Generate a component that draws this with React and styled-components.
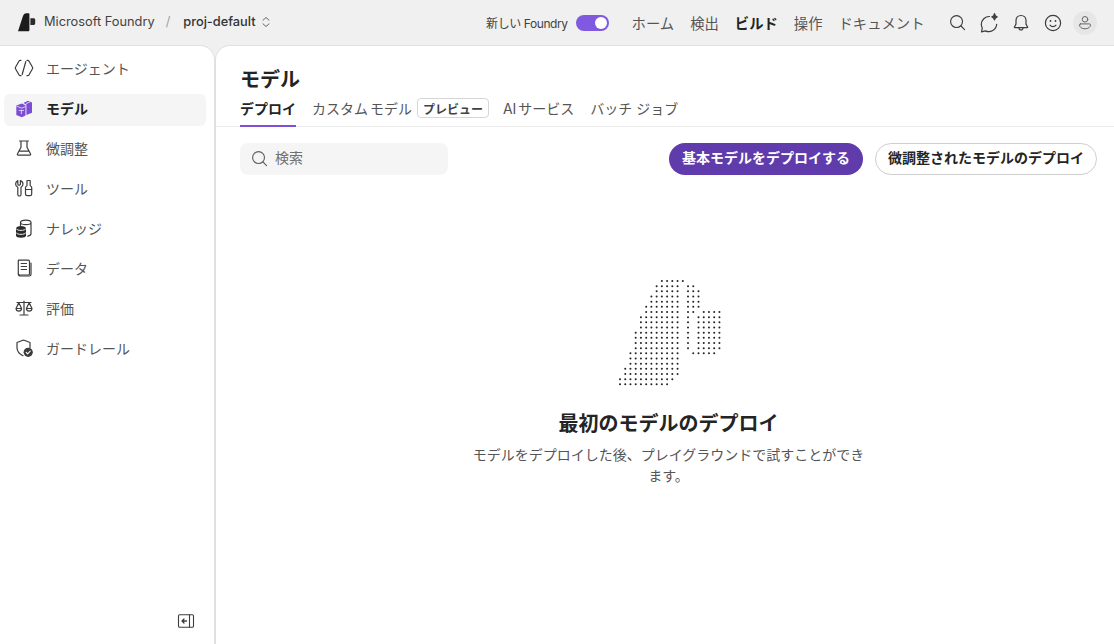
import React from "react";
import styled, { createGlobalStyle } from "styled-components";

const Global = createGlobalStyle`
  html, body { margin: 0; height: 100%; background: #f0f0f0; }
  #root { height: 100%; }
  * { box-sizing: border-box; }
  body { font-family: Inter, "Noto Sans CJK JP", sans-serif; color: #242424; overflow: hidden; }
`;

const Page = styled.div`height: 644px; display: flex; flex-direction: column;`;
const Header = styled.header`height: 45px; flex: none; display: flex; align-items: center; padding: 0 13px 0 18px; background: #f0f0f0;`;
const Brand = styled.div`display: flex; align-items: center;`;
const BrandText = styled.span`font-size: 12.8px; margin-bottom: 2px; white-space: nowrap;`;
const BrandName = styled(BrandText)`margin-left: 8px; color: #424242;`;
const Slash = styled(BrandText)`margin: 0 13px 2px 11px; color: #a0a0a0;`;
const Project = styled(BrandText)`font-weight: 500; color: #333; margin-right: 5px;`;
const HeaderRight = styled.div`margin-left: auto; display: flex; align-items: center;`;
const ToggleLabel = styled.span`font-size: 12px; letter-spacing: -.42px; color: #424242; margin-right: 8px; white-space: nowrap;`;
const Toggle = styled.span`
  width: 33px; height: 16px; border-radius: 8px; background: #7f5ae0; display: flex; align-items: center;
  justify-content: flex-end; padding-right: 2px; margin-right: 23px;
  &::after { content: ""; width: 12px; height: 12px; border-radius: 50%; background: #fff; }
`;
const TopNav = styled.nav`display: flex; gap: 16px; margin-right: 16.5px; padding-bottom: 1px;`;
const TopLink = styled.span`font-size: 14.33px; font-weight: ${p => (p.$active ? 700 : 400)}; color: ${p => (p.$active ? "#242424" : "#555")}; white-space: nowrap;`;
const TopIcons = styled.div`display: grid; grid-auto-flow: column; grid-auto-columns: 32px; justify-items: center; align-items: center;`;
const Avatar = styled.span`width: 24px; height: 24px; border-radius: 50%; background: #e6e6e6; display: flex; align-items: center; justify-content: center;`;

const Body = styled.div`flex: 1; min-height: 0; display: flex; gap: 2px; padding-top: 1px; background: #f0f0f0; overflow: hidden;`;
const Sidebar = styled.aside`width: 214px; flex: none; background: #fff; border-top-right-radius: 14px; box-shadow: 0 0 0 1px #e0e0e0; padding: 8px 8px 16px 4px; display: flex; flex-direction: column; gap: 8px;`;
const NavItem = styled.div`
  height: 32px; flex: none; display: flex; align-items: center; gap: 12px; padding: 0 10px 4px; border-radius: 6px; font-size: 14px;
  background: ${p => (p.$active ? "#f5f5f5" : "transparent")};
  color: ${p => (p.$active ? "#242424" : "#555")};
  font-weight: ${p => (p.$active ? 700 : 400)};
`;
const Collapse = styled.div`margin-top: auto; display: flex; justify-content: flex-end; padding-right: 11px;`;

const Main = styled.main`flex: 1; min-width: 0; background: #fff; border-top-left-radius: 14px; box-shadow: 0 0 0 1px #e0e0e0; display: flex; flex-direction: column;`;
const TitleBlock = styled.div`padding: 21px 17px 0 24px; border-bottom: 1px solid #ebebeb;`;
const Title = styled.h1`margin: 0 0 4px; font-size: 20px; line-height: 26px; font-weight: 700; color: #242424;`;
const Tabs = styled.div`display: flex; align-items: flex-start; gap: 16px;`;
const Tab = styled.div`
  height: 30px; display: flex; align-items: center; gap: 5px; padding-bottom: 6px; font-size: 14px; white-space: nowrap;
  word-spacing: ${p => (p.$tight ? "-2px" : "0")};
  color: ${p => (p.$active ? "#242424" : "#555")};
  font-weight: ${p => (p.$active ? 700 : 400)};
  border-bottom: 2px solid ${p => (p.$active ? "#7f4fd6" : "transparent")};
  margin-bottom: -1px;
`;
const Badge = styled.span`
  height: 20px; display: inline-flex; align-items: center; padding: 0 5px; margin-right: -2px; border: 1px solid #d6d6d6; border-radius: 4px;
  font-size: 12px; font-weight: 600; color: #424242;
`;
const Toolbar = styled.div`padding: 16px 17px 0 24px; display: flex; align-items: center; gap: 12px;`;
const Search = styled.div`
  width: 208px; height: 32px; border-radius: 8px; background: #f5f5f5; display: flex; align-items: center; gap: 7px;
  padding: 0 0 4px 11px; margin-right: auto; font-size: 14px; color: #707070;
  svg { margin-top: 3px; }
`;
const Primary = styled.button`
  height: 32px; padding: 0 13px 4px; border: 0; border-radius: 16px; background: #5f3bab; color: #fff; font: 600 14px Inter, "Noto Sans CJK JP", sans-serif; white-space: nowrap;
`;
const Secondary = styled.button`
  height: 32px; padding: 0 12px 4px; border: 1px solid #cfcfcf; border-radius: 16px; background: #fff; color: #242424; font: 600 14px Inter, "Noto Sans CJK JP", sans-serif; white-space: nowrap;
`;
const Empty = styled.section`padding: 105px 17px 0 24px; display: flex; flex-direction: column; align-items: center; text-align: center;`;
const Art = styled.svg`flex: none; margin-left: 2px; fill: #222;`;
const EmptyTitle = styled.h2`margin: 24px 0 0; font-size: 20px; line-height: 28px; font-weight: 700; color: #242424;`;
const EmptyText = styled.p`margin: 6px 0 0; width: 400px; font-size: 14px; line-height: 21px; color: #555;`;

const Ico = ({ size = 20, children, stroke = "#3c3c3c", w = 1.2 }) => (
  <svg width={size} height={size} viewBox="0 0 20 20" fill="none" stroke={stroke} strokeWidth={w} strokeLinecap="round" strokeLinejoin="round" style={{ flex: "none" }}>
    {children}
  </svg>
);

const Logo = () => (
  <svg width="18" height="19" viewBox="0 0 18 19" style={{ flex: "none" }}>
    <path d="M0 18.200 4.900 3.200C5.500 1.300 6.700.3 8.400.3h2c.7 0 1 .4 1 1v15.600c0 .8-.5 1.300-1.200 1.300H0Z" fill="#1c1c1c" />
    <path d="M12.400 5.200h3.200c1 0 1.600.6 1.600 1.500v3.600c0 1-.6 1.600-1.600 1.600h-3.200Z" fill="#2a2a2a" />
  </svg>
);

const Updown = () => (
  <svg width="10" height="12" viewBox="0 0 10 12" fill="none" stroke="#666" strokeWidth="1" strokeLinecap="round" strokeLinejoin="round" style={{ marginBottom: 2 }}>
    <path d="M2 4.200 5 1.500l3 2.700M2 7.800l3 2.700 3-2.700" />
  </svg>
);

const AgentIcon = () => (
  <Ico>
    <path d="M7 2.300H6.300a1.500 1.500 0 0 0-1.200.7L1.500 9.200a1.500 1.500 0 0 0 0 1.600l3.600 6.200c.3.500.7.700 1.200.7H7M13 2.300h.7c.5 0 .9.200 1.200.7l3.600 6.200a1.500 1.500 0 0 1 0 1.600l-3.600 6.200c-.3.500-.7.700-1.200.7H13M11.800 3.500 8.200 16.500" />
  </Ico>
);
const ModelIcon = () => (
  <svg width="20" height="20" viewBox="0 0 20 20" style={{ flex: "none" }}>
    <path d="M2.300 7.600 7.800 5.500l3.700 1.700v10.400l-3.700 1.700-5.500-2.300Z" fill="#7c4dd3" />
    <path d="M12.400 6.600 9.300 5.100 14 2.800l4 1.700v10.200l-5.600 2.200Z" fill="#7c4dd3" />
    <path d="M3 8.200l4.800 2 3.300-1.500M5.200 12.400h4.400M7.400 12.400v3.400M12.500 5.400l3.400-1.400" fill="none" stroke="#e6dcf8" strokeWidth=".9" strokeLinecap="round" />
  </svg>
);
const FlaskIcon = () => (
  <Ico>
    <path d="M5.500 3h9M7 3v6.300L3.400 16a.8.8 0 0 0 .7 1.200h11.800a.8.8 0 0 0 .7-1.200L13 9.300V3M5.400 13.200h9.200" />
  </Ico>
);
const ToolIcon = () => (
  <Ico>
    <path d="M3.800 2.600v3.300c0 .8.600 1.300 1.300 1.300s1.300-.5 1.300-1.300V2.600c1.500.6 2.600 1.800 2.600 3.500 0 1.400-.9 2.700-2 3.200v7.100a1.600 1.600 0 0 1-3.200 0V9.300c-1.200-.6-2.200-1.800-2.200-3.200 0-1.700 1-2.900 2.200-3.500Z" />
    <path d="M13 2.500h3.200v5.200c.9.300 1.500.9 1.500 1.800v6.600a1.600 1.600 0 0 1-1.600 1.600h-3a1.600 1.600 0 0 1-1.600-1.600V9.500c0-.9.600-1.500 1.500-1.800Z" />
    <path d="M11.900 11.500h5.800" />
  </Ico>
);
const KnowledgeIcon = () => (
  <svg width="20" height="20" viewBox="0 0 20 20" style={{ flex: "none" }}>
    <path d="M6.500 4.500C6.600 3 8.800 2.200 11.800 2.200c3 0 5.200.9 5.200 2.300v11.300c0 1.200-1.200 2-3.200 2.300M6.500 4.500c0 1.100 2.300 2.200 5.300 2.200S17 5.600 17 4.500M6.500 4.500v3" fill="none" stroke="#3c3c3c" strokeWidth="1.200" strokeLinecap="round" />
    <path d="M2 10.200c0-1.300 2.200-2.300 5-2.300s5 1 5 2.300v7.200c0 1.300-2.200 2.300-5 2.300s-5-1-5-2.300Z" fill="#2b2b2b" />
    <path d="M2 10.500c.5 1.200 2.500 1.900 5 1.900s4.500-.7 5-1.900M2 14.500c.5 1.200 2.500 1.900 5 1.900s4.500-.7 5-1.900" fill="none" stroke="#fff" strokeWidth=".9" />
  </svg>
);
const DataIcon = () => (
  <Ico>
    <path d="M4.800 2.200h9.400c.8 0 1.300.5 1.300 1.300v12.300c0 .7-.5 1.200-1.200 1.200H5.900a1.600 1.600 0 0 1-1.600-1.600V3c0-.5.1-.8.5-.8Z" />
    <path d="M4.300 15.800c0 1.200.7 2.200 2 2.200h9c1 0 1.700-.7 1.700-1.700V5M7.200 5.500h5.300M7.200 8.500h5.300M7.200 11.500h5.300" />
  </Ico>
);
const ScaleIcon = () => (
  <Ico>
    <path d="M3 4.500h14M10 3v13.500M6 17h8M4.800 4.800 2 10.500c.2 1.800 1.300 2.700 2.800 2.700s2.600-.9 2.800-2.700ZM2 10.500h5.600M15.200 4.800 12.400 10.500c.2 1.800 1.300 2.700 2.800 2.700s2.600-.9 2.800-2.700ZM12.400 10.500H18" />
  </Ico>
);
const ShieldIcon = () => (
  <svg width="20" height="20" viewBox="0 0 20 20" style={{ flex: "none" }}>
    <path d="M9.500 2 16 4.500v5M9.500 2 3 4.500v5.200c0 3.500 2.500 6.200 6 8" fill="none" stroke="#3c3c3c" strokeWidth="1.200" strokeLinecap="round" strokeLinejoin="round" />
    <circle cx="14.200" cy="14.300" r="4.600" fill="#3a3a3a" />
    <path d="m12.200 14.400 1.500 1.500 2.600-2.900" fill="none" stroke="#fff" strokeWidth="1.100" strokeLinecap="round" strokeLinejoin="round" />
  </svg>
);
const CollapseIcon = () => (
  <svg width="18" height="14" viewBox="0 0 18 14" fill="none" stroke="#3c3c3c" strokeWidth="1.100" strokeLinecap="round" strokeLinejoin="round">
    <rect x="1.500" y=".8" width="15" height="12.400" rx="1.300" />
    <path d="M12.500 .8v12.400" />
    <path d="M9.500 7H5.200M7 5 5 7l2 2" strokeWidth="1.300" />
  </svg>
);
const SearchIcon = ({ color = "#3c3c3c", size = 17 }) => (
  <svg width={size} height={size} viewBox="0 0 18 18" fill="none" stroke={color} strokeWidth="1.200" strokeLinecap="round">
    <circle cx="8" cy="8" r="6.300" />
    <path d="m12.700 12.700 3.800 3.800" />
  </svg>
);
const ChatSpark = () => (
  <svg width="22" height="22" viewBox="0 0 22 22" fill="none" stroke="#3c3c3c" strokeWidth="1.200" strokeLinecap="round" strokeLinejoin="round">
    <path d="M11.500 4.500A8 8 0 0 0 3.300 12.300c0 1.400.4 2.700 1 3.800l-.8 3.700 3.900-.9a8 8 0 0 0 11.300-6.600" />
    <path d="M16.500 1.500c.3 2 .9 2.900 2.700 3.300-1.800.4-2.400 1.300-2.700 3.200-.3-1.900-.9-2.800-2.700-3.200 1.800-.4 2.400-1.300 2.700-3.300Z" fill="#3c3c3c" />
  </svg>
);
const Bell = () => (
  <svg width="20" height="20" viewBox="0 0 20 20" fill="none" stroke="#3c3c3c" strokeWidth="1.200" strokeLinecap="round" strokeLinejoin="round">
    <path d="M10 2.500c-3 0-5 2.300-5 5.100v3.500l-1.600 2.900c-.1.300 0 .6.400.6h12.400c.4 0 .5-.3.400-.6L15 11.100V7.600c0-2.800-2-5.100-5-5.100ZM8 14.800c0 1.300.9 2.200 2 2.200s2-.9 2-2.200" />
  </svg>
);
const Smile = () => (
  <svg width="20" height="20" viewBox="0 0 20 20" fill="none" stroke="#3c3c3c" strokeWidth="1.200" strokeLinecap="round">
    <circle cx="10" cy="10" r="7.600" />
    <path d="M7 12.200c.7.900 1.800 1.400 3 1.400s2.300-.5 3-1.400" />
    <circle cx="7.500" cy="8" r=".9" fill="#3c3c3c" stroke="none" />
    <circle cx="12.500" cy="8" r=".9" fill="#3c3c3c" stroke="none" />
  </svg>
);
const Person = () => (
  <svg width="16" height="16" viewBox="0 0 16 16" fill="none" stroke="#666" strokeWidth="1" strokeLinecap="round">
    <circle cx="8" cy="4.300" r="2.800" />
    <path d="M3.400 8.900h9.200c.5 0 .9.400.9.900 0 2.400-2.300 4-5.500 4s-5.500-1.600-5.500-4c0-.5.400-.9.900-.9Z" />
  </svg>
);

const ROWS = [
  [[8, 12]], [[7, 11], [13, 14]], [[7, 11], [13, 15]], [[6, 11], [13, 15]], [[6, 11], [13, 15]],
  [[5, 11], [13, 15]], [[5, 11], [13, 14], [16, 19]], [[4, 11], [13, 13], [15, 19]], [[4, 11], [13, 13], [15, 19]],
  [[4, 11], [13, 13], [15, 19]], [[3, 11], [13, 13], [15, 19]], [[3, 11], [13, 13], [15, 19]], [[3, 11], [13, 13], [15, 19]],
  [[3, 11], [13, 13], [15, 19]], [[2, 11], [14, 18]], [[2, 11]], [[2, 11]], [[1, 11]], [[1, 11]], [[0, 10]], [[0, 9]],
];
const DotArt = () => (
  <Art width="102" height="106" viewBox="0 0 102 106">
    {ROWS.flatMap((segs, r) =>
      segs.flatMap(([a, b], i) =>
        Array.from({ length: b - a + 1 }, (_, j) => (
          <circle key={`${r}-${i}-${j}`} cx={1 + (a + j) * 5.233} cy={1 + r * 5.167} r={1} />
        ))
      )
    )}
  </Art>
);

const NAV = [
  ["エージェント", AgentIcon], ["モデル", ModelIcon, true], ["微調整", FlaskIcon], ["ツール", ToolIcon],
  ["ナレッジ", KnowledgeIcon], ["データ", DataIcon], ["評価", ScaleIcon], ["ガードレール", ShieldIcon],
];

export default function App() {
  return (
    <Page>
      <Global />
      <Header>
        <Brand>
          <Logo />
          <BrandName>Microsoft Foundry</BrandName>
          <Slash>/</Slash>
          <Project>proj-default</Project>
          <Updown />
        </Brand>
        <HeaderRight>
          <ToggleLabel>新しい Foundry</ToggleLabel>
          <Toggle />
          <TopNav>
            <TopLink>ホーム</TopLink>
            <TopLink>検出</TopLink>
            <TopLink $active>ビルド</TopLink>
            <TopLink>操作</TopLink>
            <TopLink>ドキュメント</TopLink>
          </TopNav>
          <TopIcons>
            <SearchIcon />
            <ChatSpark />
            <Bell />
            <Smile />
            <Avatar><Person /></Avatar>
          </TopIcons>
        </HeaderRight>
      </Header>
      <Body>
        <Sidebar>
          {NAV.map(([label, Icon, active]) => (
            <NavItem key={label} $active={active}>
              <Icon />
              {label}
            </NavItem>
          ))}
          <Collapse><CollapseIcon /></Collapse>
        </Sidebar>
        <Main>
          <TitleBlock>
            <Title>モデル</Title>
            <Tabs>
              <Tab $active>デプロイ</Tab>
              <Tab $tight>カスタム モデル<Badge>プレビュー</Badge></Tab>
              <Tab $tight>AI サービス</Tab>
              <Tab>バッチ ジョブ</Tab>
            </Tabs>
          </TitleBlock>
          <Toolbar>
            <Search><SearchIcon color="#616161" />検索</Search>
            <Primary>基本モデルをデプロイする</Primary>
            <Secondary>微調整されたモデルのデプロイ</Secondary>
          </Toolbar>
          <Empty>
            <DotArt />
            <EmptyTitle>最初のモデルのデプロイ</EmptyTitle>
            <EmptyText>モデルをデプロイした後、プレイグラウンドで試すことができます。</EmptyText>
          </Empty>
        </Main>
      </Body>
    </Page>
  );
}
